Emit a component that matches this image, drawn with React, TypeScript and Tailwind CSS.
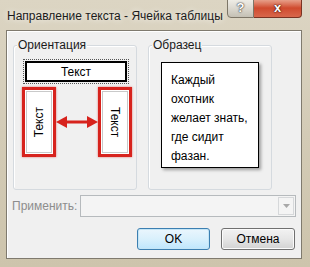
import React from "react";

const font = "font-['Liberation_Sans',Arial,sans-serif]";

const Group = ({ title, children }: { title: string; children: React.ReactNode }) => (
  <div className="relative w-[124px] h-[145px] rounded-[3px] border border-[#d5dadf] shadow-[inset_1px_1px_0_#fff]">
    <span className="absolute left-[3px] top-[-8px] px-[1px] bg-[#f0f0f0] text-[12px] leading-[14px] text-[#1a1a1a]">
      {title}
    </span>
    {children}
  </div>
);

const RedBox = ({ up }: { up?: boolean }) => (
  <div className="h-[70px] w-[34px] border-[3px] border-[#d7231d] bg-white p-[1px] shadow-[0_0_2px_rgba(215,35,29,0.6)]">
    <div className="flex h-full w-full items-center justify-center border border-[#c9c9c9]">
      <span
        className={`[writing-mode:vertical-rl] text-[12px] leading-[14px] text-black ${up ? "rotate-180" : ""}`}
      >
        Текст
      </span>
    </div>
  </div>
);

const App = () => {
  return (
    <div className={`${font} w-[310px] h-[267px] overflow-hidden bg-gradient-to-b from-[#dcd5c3] via-[#d3cbb6] to-[#cdc4ac]`}>
      {/* title bar */}
      <div className="relative flex h-[30px] items-start">
        <div className="pl-[7px] pt-[9px] text-[12px] leading-[14px] text-[#1b1b1b] [text-shadow:0_0_6px_#fff]">
          Направление текста - Ячейка таблицы
        </div>
        <div className="absolute left-[227px] top-[-2px] flex h-[20px]">
          <div className="flex w-[27px] items-center justify-center rounded-bl-[4px] border border-[#7d7667] bg-gradient-to-b from-[#f1efe9] via-[#dcd9d0] to-[#c4c0b4] text-[13px] font-bold text-white [text-shadow:0_0_2px_#333,0_0_1px_#222]">
            ?
          </div>
          <div className="flex w-[48px] items-center justify-center rounded-br-[4px] border border-l-0 border-[#7a3322] bg-gradient-to-b from-[#e8a894] via-[#cf4a2e] to-[#d8674b] text-[13px] font-bold text-white [text-shadow:0_0_2px_#3a0d05,0_0_1px_#3a0d05]">
            x
          </div>
        </div>
      </div>

      {/* client area */}
      <div className="ml-[6px] h-[229px] w-[296px] border border-[#7f7a6e] bg-[#f0f0f0] text-[#1a1a1a] shadow-[inset_1px_1px_0_#fff]">
        <div className="flex gap-[11px] pl-[6px] pt-[14px]">
          <Group title="Ориентация">
            <div className="pl-[8px] pt-[13px]">
              <div className="ml-[1px] h-[25px] w-[106px] border border-dotted border-[#555] p-[1px]">
                <div className="flex h-full items-center justify-center border-2 border-black bg-white text-[12px] leading-[14px] text-black">
                  Текст
                </div>
              </div>
              <div className="mt-[3px] flex items-center">
                <RedBox up />
                <svg width="42" height="14" viewBox="0 0 42 14" className="shrink-0">
                  <line x1="6" y1="7" x2="36" y2="7" stroke="#d7231d" strokeWidth="3" />
                  <polygon points="0,7 11,1 11,13" fill="#d7231d" />
                  <polygon points="42,7 31,1 31,13" fill="#d7231d" />
                </svg>
                <RedBox />
              </div>
            </div>
          </Group>
          <Group title="Образец">
            <div className="pl-[12px] pt-[16px]">
              <div className="h-[106px] w-[98px] border border-black bg-white pl-[9px] pt-[8px] text-[12px] leading-[19px] text-black shadow-[2px_2px_3px_rgba(0,0,0,0.35)]">
                <div>Каждый</div>
                <div>охотник</div>
                <div>желает знать,</div>
                <div>где сидит</div>
                <div>фазан.</div>
              </div>
            </div>
          </Group>
        </div>

        <div className="mt-[5px] flex items-center pl-[5px]">
          <span className="w-[68px] text-[12px] leading-[14px] text-[#8d8d8d]">Применить:</span>
          <div className="flex h-[22px] w-[216px] items-stretch border border-[#b6babd] bg-[#f4f4f4]">
            <div className="flex-1" />
            <div className="m-[1px] flex w-[16px] items-center justify-center border border-[#d6d8da] bg-[#f4f4f4]">
              <svg width="7" height="4" viewBox="0 0 7 4">
                <polygon points="0,0 7,0 3.5,4" fill="#a8a8a8" />
              </svg>
            </div>
          </div>
        </div>

        <div className="mt-[11px] flex justify-end gap-[11px] pr-[6px]">
          <button className="h-[22px] w-[73px] rounded-[3px] border border-[#3c7fb1] bg-gradient-to-b from-[#eaf6fd] via-[#d9f0fc] to-[#bee6fd] text-[12px] leading-[14px] text-black shadow-[inset_0_0_0_1px_#c4e5f6]">
            OK
          </button>
          <button className="h-[22px] w-[74px] rounded-[3px] border border-[#707070] bg-gradient-to-b from-[#f2f2f2] via-[#e6e6e6] to-[#d2d2d2] text-[12px] leading-[14px] text-black shadow-[inset_0_0_0_1px_#fbfbfb]">
            Отмена
          </button>
        </div>
      </div>
    </div>
  );
};

export default App;
